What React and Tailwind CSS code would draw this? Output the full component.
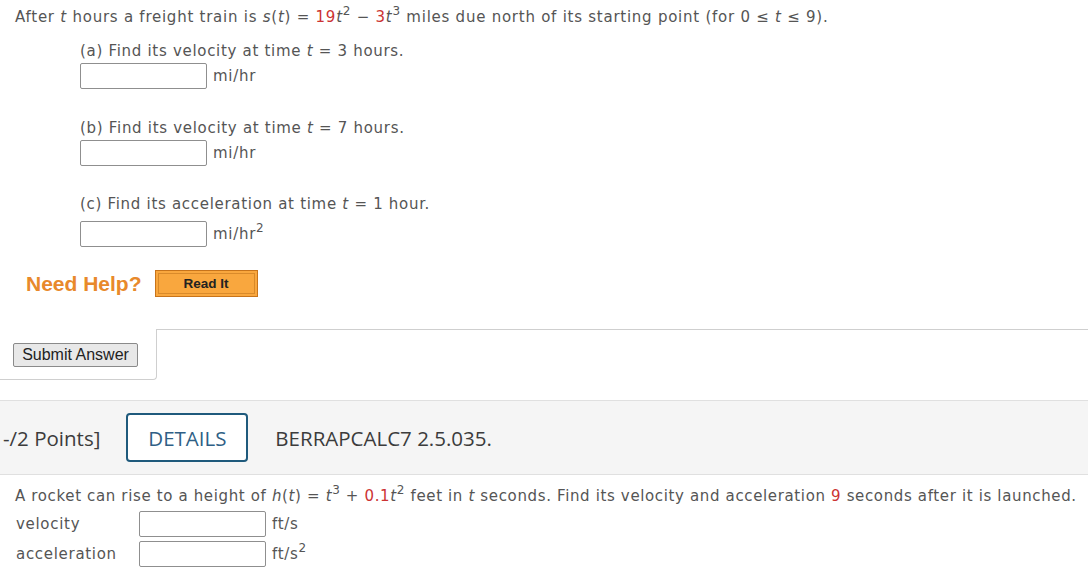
import React from "react";

const R = ({ children }) => <span className="text-[#cc3333]">{children}</span>;
const I = ({ children }) => <i>{children}</i>;
const S = ({ children }) => <sup className="text-[12px] top-[-0.55em]">{children}</sup>;

function Box({ w = "w-[127px]" }) {
  return <div className={`${w} h-[26px] border border-[#8f8f8f] rounded-[2px] bg-white`} />;
}

export default function App() {
  return (
    <div className="w-[1088px] h-[571px] overflow-hidden bg-white font-['DejaVu_Sans',sans-serif] text-[15px] tracking-[0.7px] text-[#555] leading-[22px]">
      <div className="pl-[15px] pt-[6px] whitespace-nowrap tracking-[0.75px]">
        After <I>t</I> hours a freight train is <I>s</I>(<I>t</I>) = <R>19</R><I>t</I><S>2</S> − <R>3</R><I>t</I><S>3</S> miles due north of its starting point (for 0 ≤ <I>t</I> ≤ 9).
      </div>

      <div className="pl-[80px] pt-[12px]">
        <div>(a) Find its velocity at time <I>t</I> = 3 hours.</div>
        <div className="flex items-center mt-[1px] gap-[6px]">
          <Box />
          <span>mi/hr</span>
        </div>

        <div className="mt-[28px]">(b) Find its velocity at time <I>t</I> = 7 hours.</div>
        <div className="flex items-center mt-[1px] gap-[6px]">
          <Box />
          <span>mi/hr</span>
        </div>

        <div className="mt-[27px]">(c) Find its acceleration at time <I>t</I> = 1 hour.</div>
        <div className="flex items-center mt-[6px] gap-[6px]">
          <Box />
          <span>mi/hr<S>2</S></span>
        </div>
      </div>

      <div className="flex items-center pl-[26px] mt-[23px] gap-[13px] tracking-normal">
        <span className="font-['Liberation_Sans',sans-serif] font-bold text-[21px] text-[#e8892b]">Need Help?</span>
        <div className="w-[103px] h-[27px] border border-[#c8741a] bg-[#f9a73e] p-[2px]">
          <div className="w-full h-full border border-[#d98a2a] flex items-center justify-center font-['Liberation_Sans',sans-serif] font-bold text-[13.5px] text-[#222]">
            Read It
          </div>
        </div>
      </div>

      <div className="flex mt-[32px] tracking-normal">
        <div className="w-[157px] h-[51px] border-r border-b border-[#cfcfcf] rounded-br-[4px] pl-[13px] pt-[14px]">
          <div className="w-[125px] h-[24px] border border-[#8a8a8a] rounded-[2px] bg-[#e8e8e8] flex items-center justify-center font-['Liberation_Sans',sans-serif] text-[16px] text-[#222]">
            Submit Answer
          </div>
        </div>
        <div className="flex-1 border-t border-[#cfcfcf]" />
      </div>

      <div className="mt-[20px] h-[75px] bg-[#f5f5f5] border-t border-b border-[#e0e0e0] flex items-center font-['Open_Sans',sans-serif] text-[20.5px] tracking-normal text-[#3c3c3c]">
        <span className="ml-[3px]">-/2 Points]</span>
        <div className="ml-[26px] w-[122px] h-[49px] border-2 border-[#1f5a7c] rounded-[4px] bg-white flex items-center justify-center text-[#2f5f86]">
          DETAILS
        </div>
        <span className="ml-[27px]">BERRAPCALC7 2.5.035.</span>
      </div>

      <div className="pl-[15px] pt-[10px] whitespace-nowrap tracking-[0.64px]">
        A rocket can rise to a height of <I>h</I>(<I>t</I>) = <I>t</I><S>3</S> + <R>0.1</R><I>t</I><S>2</S> feet in <I>t</I> seconds. Find its velocity and acceleration <R>9</R> seconds after it is launched.
      </div>
      <div className="pl-[16px] flex items-center mt-[4px]">
        <span className="w-[123px]">velocity</span>
        <Box w="w-[127px]" />
        <span className="ml-[6px]">ft/s</span>
      </div>
      <div className="pl-[16px] flex items-center mt-[4px]">
        <span className="w-[123px]">acceleration</span>
        <Box w="w-[127px]" />
        <span className="ml-[6px]">ft/s<S>2</S></span>
      </div>
    </div>
  );
}
